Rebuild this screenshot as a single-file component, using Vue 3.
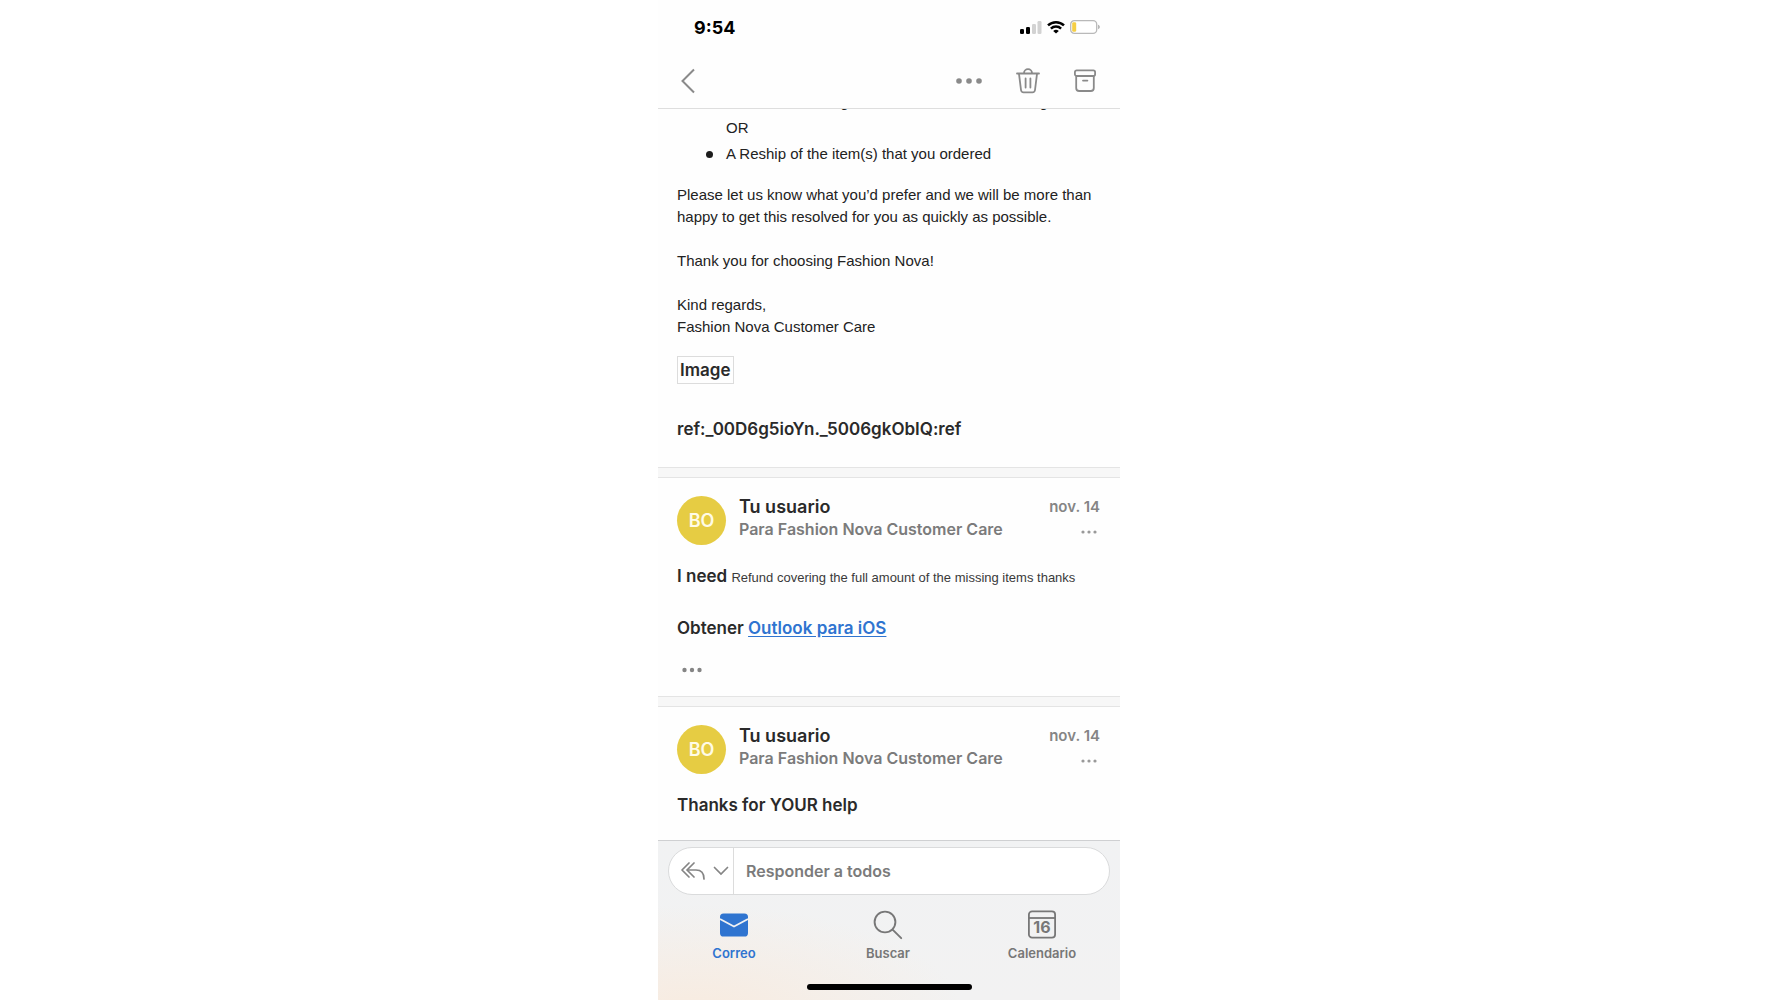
<template>
  <div class="phone">
    <header class="top">
      <div class="status-bar">
        <span class="time">9:54</span>
        <div class="status-icons">
          <svg width="22" height="14" viewBox="0 0 22 14">
            <rect x="0" y="9" width="4" height="5" rx="1.3" fill="#000" />
            <rect x="6" y="7" width="4" height="7" rx="1.3" fill="#000" />
            <rect x="12" y="4" width="4" height="10" rx="1.3" fill="#d2d2d2" />
            <rect x="17.5" y="1" width="4" height="13" rx="1.3" fill="#d2d2d2" />
          </svg>
          <svg width="18" height="14" viewBox="0 0 18 14" fill="none" stroke="#000" stroke-width="2.5">
            <path d="M1 5.4a11.6 11.6 0 0 1 16 0" />
            <path d="M3.9 8.6a7.4 7.4 0 0 1 10.2 0" />
            <path d="M9 13.6L6.2 10.9a4.2 4.2 0 0 1 5.6 0z" fill="#000" stroke="none" />
          </svg>
          <svg width="30" height="14" viewBox="0 0 30 14">
            <rect x="0.7" y="0.7" width="26" height="12.6" rx="3.6" fill="#fff" stroke="#b9b9b9" stroke-width="1.3" />
            <rect x="2.2" y="2.2" width="4" height="9.6" rx="1.4" fill="#f6cf45" />
            <path d="M28.2 4.8v4.4c1-.4 1.5-1.2 1.5-2.2s-.5-1.8-1.5-2.2z" fill="#a5a5a5" />
          </svg>
        </div>
      </div>
      <div class="toolbar">
        <button class="icon-btn" aria-label="Atrás">
          <svg width="14" height="26" viewBox="0 0 14 26" fill="none" stroke="#8a8a8a" stroke-width="2">
            <path d="M13 1.5L1.5 13 13 24.5" />
          </svg>
        </button>
        <div class="actions">
          <button class="icon-btn" aria-label="Más">
            <svg width="26" height="6" viewBox="0 0 26 6" fill="#8a8a8a">
              <circle cx="3" cy="3" r="2.8" />
              <circle cx="13" cy="3" r="2.8" />
              <circle cx="23" cy="3" r="2.8" />
            </svg>
          </button>
          <button class="icon-btn" aria-label="Eliminar">
            <svg width="24" height="26" viewBox="0 0 24 26" fill="none" stroke="#8a8a8a" stroke-width="1.8" stroke-linecap="round">
              <path d="M1 5.5h22" />
              <path d="M8 5.2a4 4 0 0 1 8 0" />
              <path d="M3 5.8l2 16.2a2.6 2.6 0 0 0 2.6 2.3h8.8a2.6 2.6 0 0 0 2.6-2.3l2-16.2" />
              <path d="M9.6 10.5v9M14.4 10.5v9" />
            </svg>
          </button>
          <button class="icon-btn" aria-label="Archivar">
            <svg width="22" height="24" viewBox="0 0 22 24" fill="none" stroke="#8a8a8a" stroke-width="1.8" stroke-linecap="round">
              <rect x="0.9" y="1.4" width="20.2" height="5.6" rx="1.8" />
              <path d="M2.2 7.2v11.8a3 3 0 0 0 3 3h11.6a3 3 0 0 0 3-3V7.2" />
              <path d="M9 11.6h4.4" />
            </svg>
          </button>
        </div>
      </div>
    </header>

    <main class="thread">
      <article class="message first">
        <ul class="options">
          <li>A Refund covering the full amount of the missing items<br />OR</li>
          <li>A Reship of the item(s) that you ordered</li>
        </ul>
        <div class="letter">
          <p>Please let us know what you’d prefer and we will be more than happy to get this resolved for you as quickly as possible.</p>
          <p>Thank you for choosing Fashion Nova!</p>
          <p>Kind regards,<br />Fashion Nova Customer Care</p>
        </div>
        <span class="image-box">Image</span>
        <p class="line">ref:_00D6g5ioYn._5006gkObIQ:ref</p>
      </article>

      <article v-for="mail in mails" :key="mail.id" class="message reply">
        <div class="mail-header">
          <span class="avatar">{{ mail.initials }}</span>
          <div class="people">
            <h2>{{ mail.from }}</h2>
            <p>{{ mail.to }}</p>
          </div>
          <div class="meta">
            <time>{{ mail.date }}</time>
            <button class="icon-btn" aria-label="Más opciones">
              <svg width="16" height="4" viewBox="0 0 16 4" fill="#999">
                <circle cx="2" cy="2" r="1.6" />
                <circle cx="8" cy="2" r="1.6" />
                <circle cx="14" cy="2" r="1.6" />
              </svg>
            </button>
          </div>
        </div>
        <p class="line">{{ mail.text }} <span v-if="mail.quote" class="quote">{{ mail.quote }}</span></p>
        <template v-if="mail.signature">
          <p class="line signature">Obtener <a href="#">Outlook para iOS</a></p>
          <button class="icon-btn expand" aria-label="Mostrar más">
            <svg width="20" height="6" viewBox="0 0 20 6" fill="#858585">
              <circle cx="2.5" cy="3" r="2.2" />
              <circle cx="10" cy="3" r="2.2" />
              <circle cx="17.5" cy="3" r="2.2" />
            </svg>
          </button>
        </template>
      </article>
    </main>

    <footer class="bottom">
      <div class="reply-box">
        <button class="reply-mode" aria-label="Tipo de respuesta">
          <svg width="24" height="18" viewBox="0 0 24 18" fill="none" stroke="#858585" stroke-width="1.7" stroke-linecap="round" stroke-linejoin="round">
            <path d="M8 1L1 8l7 7" />
            <path d="M13 1L6 8l7 7" />
            <path d="M6.5 8h8.5c5 0 8 3 8 9" />
          </svg>
          <svg width="16" height="10" viewBox="0 0 16 10" fill="none" stroke="#858585" stroke-width="1.7" stroke-linecap="round">
            <path d="M1.5 1.5L8 8l6.5-6.5" />
          </svg>
        </button>
        <input v-model="draft" type="text" aria-label="Responder a todos" placeholder="Responder a todos" />
      </div>
      <nav class="tabs">
        <a href="#" class="tab active">
          <svg width="28" height="30" viewBox="0 0 28 30">
            <rect x="0" y="3.5" width="28" height="23" rx="3.6" fill="#2f74d0" />
            <path d="M0 9l14 7.5 14-7.5" fill="none" stroke="#f0f1f3" stroke-width="1.7" />
          </svg>
          Correo
        </a>
        <a href="#" class="tab">
          <svg width="30" height="30" viewBox="0 0 30 30" fill="none" stroke="#777" stroke-width="1.9" stroke-linecap="round">
            <circle cx="12" cy="12" r="10.4" />
            <path d="M19.6 19.6l8.6 8.6" />
          </svg>
          Buscar
        </a>
        <a href="#" class="tab">
          <svg width="28" height="30" viewBox="0 0 28 30" fill="none" stroke="#777" stroke-width="1.8">
            <rect x="0.9" y="1.4" width="26.2" height="26.2" rx="3.2" />
            <path d="M1 8h26" />
            <text x="14" y="23" class="day">16</text>
          </svg>
          Calendario
        </a>
      </nav>
      <div class="home-indicator"></div>
    </footer>
  </div>
</template>

<script setup>
import { ref } from 'vue';

const draft = ref('');
const mails = ref([
  {
    id: 1,
    initials: 'BO',
    from: 'Tu usuario',
    to: 'Para Fashion Nova Customer Care',
    date: 'nov. 14',
    text: 'I need',
    quote: 'Refund covering the full amount of the missing items thanks',
    signature: true
  },
  {
    id: 2,
    initials: 'BO',
    from: 'Tu usuario',
    to: 'Para Fashion Nova Customer Care',
    date: 'nov. 14',
    text: 'Thanks for YOUR help',
    signature: false
  }
]);
</script>

<style>
body { margin: 0; background: #fff; }
</style>

<style scoped>
.phone { display: flex; flex-direction: column; max-width: 462px; height: 100vh; margin: 0 auto; background: #fefefe; color: #2a2a2a; font-family: Inter, "Liberation Sans", sans-serif; font-weight: 600; }
p, h2, ul { margin: 0; padding: 0; }
.icon-btn { display: flex; padding: 0; border: none; background: none; cursor: pointer; }

.top { flex-shrink: 0; border-bottom: 1px solid #dedede; background: #fefefe; }
.status-bar { display: flex; align-items: center; justify-content: space-between; height: 54px; padding: 0 20px 0 36px; }
.time { color: #000; font-size: 18px; font-weight: 700; }
.status-icons { display: flex; align-items: center; gap: 5px; }
.toolbar { display: flex; align-items: center; justify-content: space-between; height: 54px; padding: 0 24px 0 23px; }
.actions { display: flex; align-items: center; gap: 34px; }

.thread { flex: 1; min-height: 0; overflow: hidden; }
.message { padding: 0 20px 0 19px; }
.first { padding-bottom: 25px; }
/* the thread is scrolled, so the first option sits partly under the toolbar */
.options { margin-top: -20px; padding-left: 49px; list-style: none; font: 400 15px/26px "Liberation Sans", Arial, sans-serif; color: #222; }
.options li { position: relative; }
.options li::before { content: ""; position: absolute; left: -20px; top: 10px; width: 7px; height: 7px; border-radius: 50%; background: #1c1c1c; }
.letter { margin-top: 17px; font: 400 15px/22px "Liberation Sans", Arial, sans-serif; color: #222; }
.letter p + p { margin-top: 22px; }
.image-box { display: inline-block; margin: 18px 0 32px; padding: 0 3px 0 2px; border: 1px solid #dcdcdc; font-size: 17px; line-height: 26px; }
.line { font-size: 17px; line-height: 26px; }
.reply { border-top: 1px solid #e4e4e4; }
.reply::before { content: ""; display: block; height: 9px; margin: 0 -20px 0 -19px; border-bottom: 1px solid #e4e4e4; background: #f7f7f7; }
.mail-header { display: flex; align-items: flex-start; gap: 13px; margin: 18px 0; }
.avatar { display: flex; align-items: center; justify-content: center; width: 49px; height: 49px; border-radius: 50%; background: #e6cc43; color: #fffbe6; font-size: 18px; }
.people { flex: 1; }
.people h2 { font-size: 18px; font-weight: 600; line-height: 22px; }
.people p { color: #7b7b7b; font-size: 16px; line-height: 22px; }
.meta { display: flex; flex-direction: column; align-items: flex-end; gap: 12px; color: #858585; font-size: 15px; line-height: 22px; }
.meta .icon-btn { margin-right: 3px; }
.quote { color: #3a3a3a; font: 400 13px/26px "Liberation Sans", Arial, sans-serif; }
.signature { margin-top: 24px; }
.signature a { color: #2f74d0; text-decoration: underline; text-underline-offset: 2px; }
.expand { margin: 26px 0 23px 5px; }

.bottom { display: flex; flex-direction: column; flex-shrink: 0; padding: 6px 10px 10px; border-top: 1px solid #cfd0d2; background: radial-gradient(ellipse at 8% 110%, #f8ebdf 0%, rgba(248, 236, 226, 0) 45%), linear-gradient(#f1f2f3, #f2f2f2); }
.reply-box { display: flex; height: 46px; border: 1px solid #dadbdc; border-radius: 24px; background: #fff; overflow: hidden; }
.reply-mode { display: flex; align-items: center; gap: 8px; padding: 0 4px 0 12px; border: none; border-right: 1px solid #dcdcdc; background: none; cursor: pointer; }
.reply-box input { flex: 1; min-width: 0; padding: 0 12px; border: none; outline: none; background: none; color: #2a2a2a; font: inherit; font-size: 16px; }
.reply-box input::placeholder { color: #7b7b7b; opacity: 1; }
.tabs { display: flex; justify-content: space-between; margin-top: 15px; padding: 0 13px 0 11px; }
.tab { display: flex; flex-direction: column; align-items: center; gap: 4px; width: 110px; color: #777; font-size: 13px; line-height: 18px; text-decoration: none; }
.tab.active { color: #2f74d0; }
.day { fill: #777; stroke: none; font-size: 16px; font-weight: 700; text-anchor: middle; }
.home-indicator { width: 165px; height: 6px; margin: 22px auto 0; border-radius: 3px; background: #000; }
</style>
